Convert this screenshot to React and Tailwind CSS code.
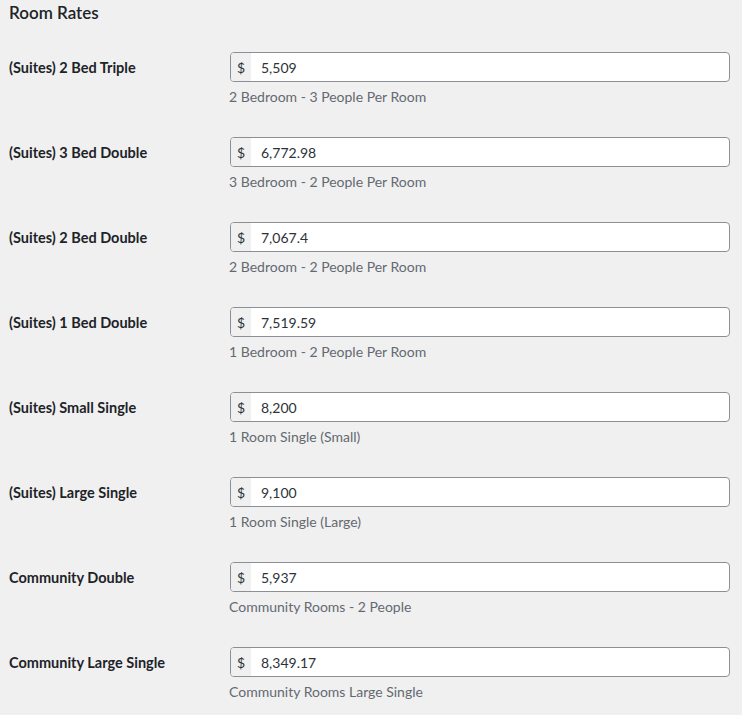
import React from "react";

const rates = [
  { name: "(Suites) 2 Bed Triple", value: "5,509", desc: "2 Bedroom - 3 People Per Room" },
  { name: "(Suites) 3 Bed Double", value: "6,772.98", desc: "3 Bedroom - 2 People Per Room" },
  { name: "(Suites) 2 Bed Double", value: "7,067.4", desc: "2 Bedroom - 2 People Per Room" },
  { name: "(Suites) 1 Bed Double", value: "7,519.59", desc: "1 Bedroom - 2 People Per Room" },
  { name: "(Suites) Small Single", value: "8,200", desc: "1 Room Single (Small)" },
  { name: "(Suites) Large Single", value: "9,100", desc: "1 Room Single (Large)" },
  { name: "Community Double", value: "5,937", desc: "Community Rooms - 2 People" },
  { name: "Community Large Single", value: "8,349.17", desc: "Community Rooms Large Single" },
];

const App = () => {
  return (
    <div className="min-h-[715px] w-full bg-[#f0f0f1] pl-[9px] font-['Lato','Liberation_Sans',sans-serif] text-[#1d2327]">
      <h2 className="pt-[2px] text-[17px] font-semibold leading-[22px]">Room Rates</h2>
      <div className="mt-[13px] flex flex-col">
        {rates.map((r, index) => (
          <div className="flex py-[15px]" key={index}>
            <div className="w-[221px] pt-[6px] text-[14.5px] font-bold leading-[20px]">{r.name}</div>
            <div className="flex flex-col">
              <div className="flex h-[30px] w-[500px] overflow-hidden rounded-[4px] border border-[#8c8f94] bg-white">
                <span className="flex w-[20px] items-center justify-center bg-[#f0f0f1] text-[14px] text-[#2c3338]">$</span>
                <span className="flex items-center pl-[10px] text-[14px] text-[#2c3338]">{r.value}</span>
              </div>
              <p className="mt-[4px] -ml-px text-[14px] leading-[21px] text-[#646970]">{r.desc}</p>
            </div>
          </div>
        ))}
      </div>
    </div>
  );
};

export default App;
